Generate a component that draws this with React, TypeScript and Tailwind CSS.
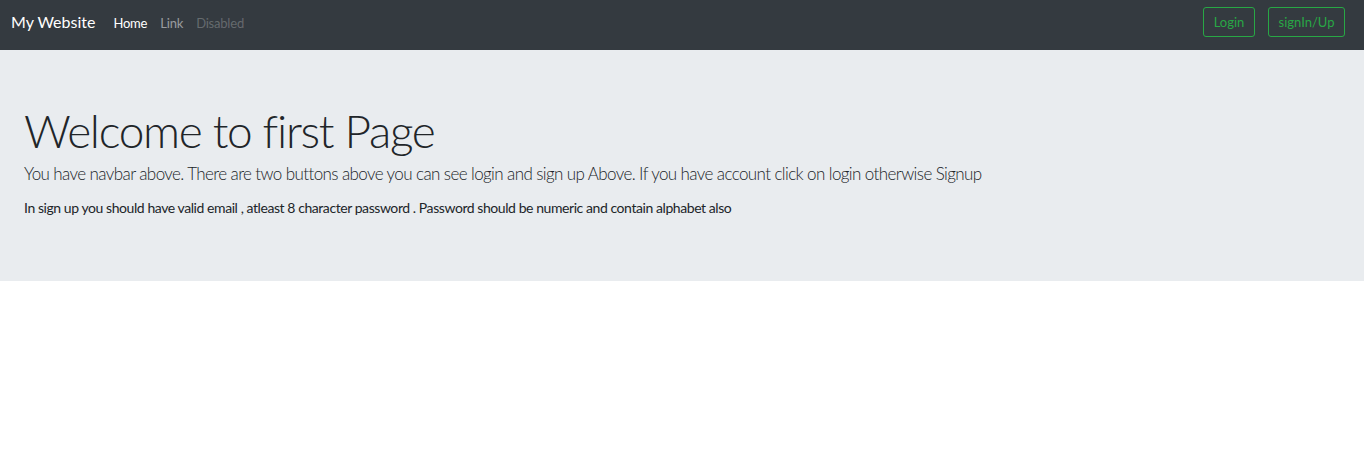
export default function App() {
  return (
    <div className="min-h-screen bg-white font-['Lato','Liberation_Sans',sans-serif]">
      {/* navbar */}
      <nav className="h-[50px] bg-[#343a40] flex items-start pl-[11px] pr-[19px]">
        <a className="mt-[12px] text-[16px] leading-[20px] text-white mr-[18px]">My Website</a>
        <ul className="mt-[13px] flex items-center text-[13px] leading-[20px] tracking-[-0.2px]">
          <li className="mr-[13px] text-white">Home</li>
          <li className="mr-[13px] text-white/50">Link</li>
          <li className="text-white/25">Disabled</li>
        </ul>
        <div className="ml-auto mt-[7px] flex items-center gap-[13px]">
          <button className="h-[30px] w-[52px] pt-[2px] border border-[#28a745] rounded-[3px] text-[#28a745] text-[13px]">
            Login
          </button>
          <button className="h-[30px] w-[77px] pt-[2px] border border-[#28a745] rounded-[3px] text-[#28a745] text-[13px]">
            signIn/Up
          </button>
        </div>
      </nav>

      {/* jumbotron */}
      <div className="h-[231px] bg-[#e9ecef] px-6 pt-[51px]">
        <h1 className="text-[46px] leading-[60px] font-light tracking-[-1.3px] text-[#212529] -mb-px">
          Welcome to first Page
        </h1>
        <p className="text-[17px] leading-[27px] font-light tracking-[-0.6px] text-[#212529] mb-[10px]">
          You have navbar above. There are two buttons above you can see login and sign up Above. If you have account click on login otherwise Signup
        </p>
        <p className="text-[14px] leading-[21.6px] tracking-[-0.43px] text-[#212529]">
          In sign up you should have valid email , atleast 8 character password . Password should be numeric and contain alphabet also
        </p>
      </div>
    </div>
  );
}
